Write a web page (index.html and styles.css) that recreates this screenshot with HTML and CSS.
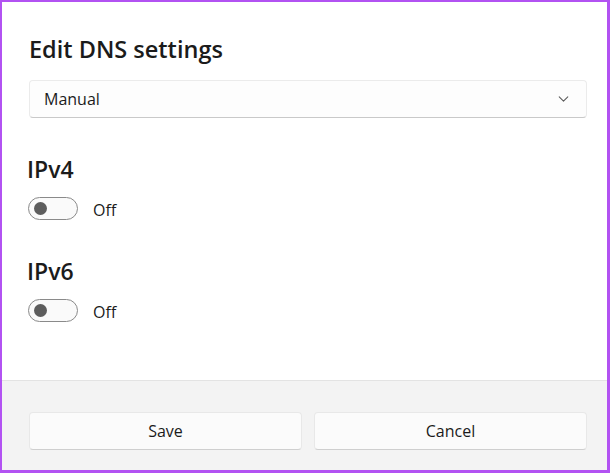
FILE: index.html
```html
<!DOCTYPE html>
<html>
<head>
<meta charset="utf-8">
<link rel="stylesheet" href="styles.css">
</head>
<body>
<div class="dialog">
  <div class="content">
    <h1 class="title">Edit DNS settings</h1>
    <div class="select">
      <span class="select-value">Manual</span>
      <svg class="chevron" width="12" height="7" viewBox="0 0 12 7"><path d="M1 1 L6 6 L11 1" fill="none" stroke="#5a5a5a" stroke-width="1.2" stroke-linecap="round" stroke-linejoin="round"/></svg>
    </div>
    <section class="group">
      <h2 class="group-title">IPv4</h2>
      <div class="toggle-row">
        <span class="toggle"><span class="knob"></span></span>
        <span class="toggle-label">Off</span>
      </div>
    </section>
    <section class="group">
      <h2 class="group-title">IPv6</h2>
      <div class="toggle-row">
        <span class="toggle"><span class="knob"></span></span>
        <span class="toggle-label">Off</span>
      </div>
    </section>
  </div>
  <div class="footer">
    <button class="btn">Save</button>
    <button class="btn">Cancel</button>
  </div>
</div>
</body>
</html>
```

FILE: styles.css
```css
html, body {
  margin: 0;
  padding: 0;
}
body {
  font-family: "Open Sans", "Noto Sans", sans-serif;
  color: #1b1b1b;
  background: #fff;
}
.dialog {
  width: 610px;
  height: 473px;
  box-sizing: border-box;
  border-style: solid;
  border-color: #b252f2;
  border-width: 2px 3px 3px 2px;
  display: flex;
  flex-direction: column;
  background: #fff;
}
.content {
  flex: 1;
  padding: 32px 20px 0 25px;
}
.title {
  margin: 0 0 0 2px;
  font-size: 23.5px;
  font-weight: 600;
  line-height: 30px;
  color: #1b1b1b;
}
.select {
  margin: 16px 0 0 2px;
  height: 38px;
  box-sizing: border-box;
  border: 1px solid #ebebeb;
  border-bottom-color: #c9c9c9;
  border-radius: 4px;
  background: #fdfdfd;
  display: flex;
  align-items: center;
  justify-content: space-between;
  padding: 0 17px 0 14px;
}
.select-value {
  font-size: 16px;
  color: #1b1b1b;
}
.chevron {
  display: block;
  width: 11px;
  height: 6px;
}
.group {
  margin-top: 36px;
}
.group-title {
  margin: 0;
  font-size: 23px;
  font-weight: 600;
  line-height: 30px;
}
.toggle-row {
  display: flex;
  align-items: flex-start;
  margin: 13px 0 0 1px;
}
.toggle {
  width: 50px;
  height: 23px;
  box-sizing: border-box;
  border: 1px solid #8a8a8a;
  border-radius: 12px;
  background: #fafafa;
  display: flex;
  align-items: center;
  padding-left: 5px;
}
.knob {
  width: 13px;
  height: 13px;
  border-radius: 50%;
  background: #5d5d5d;
}
.toggle-label {
  margin-left: 15px;
  font-size: 16px;
  height: 23px;
  line-height: 27px;
  color: #1b1b1b;
}
.footer {
  height: 90px;
  box-sizing: border-box;
  border-top: 1px solid #e3e3e3;
  background: #f3f3f3;
  display: flex;
  gap: 12px;
  padding: 31px 20px 0 27px;
}
.btn {
  flex: 1;
  height: 38px;
  box-sizing: border-box;
  border: 1px solid #e8e8e8;
  border-bottom-color: #cfcfcf;
  border-radius: 4px;
  background: #fbfbfb;
  font-family: "Open Sans", "Noto Sans", sans-serif;
  font-size: 16px;
  color: #1b1b1b;
  padding: 0;
}
```
